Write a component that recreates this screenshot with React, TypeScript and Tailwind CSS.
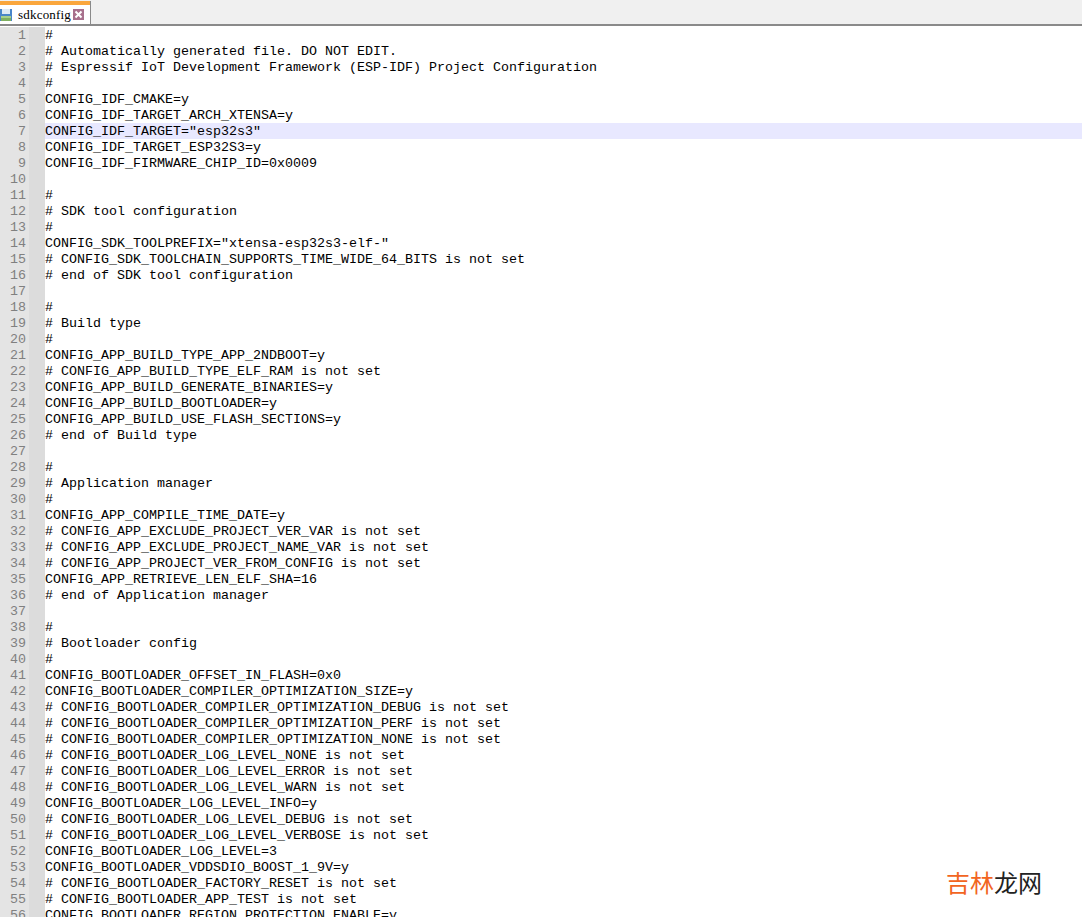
const lines: string[] = [
  "#",
  "# Automatically generated file. DO NOT EDIT.",
  "# Espressif IoT Development Framework (ESP-IDF) Project Configuration",
  "#",
  "CONFIG_IDF_CMAKE=y",
  "CONFIG_IDF_TARGET_ARCH_XTENSA=y",
  'CONFIG_IDF_TARGET="esp32s3"',
  "CONFIG_IDF_TARGET_ESP32S3=y",
  "CONFIG_IDF_FIRMWARE_CHIP_ID=0x0009",
  "",
  "#",
  "# SDK tool configuration",
  "#",
  'CONFIG_SDK_TOOLPREFIX="xtensa-esp32s3-elf-"',
  "# CONFIG_SDK_TOOLCHAIN_SUPPORTS_TIME_WIDE_64_BITS is not set",
  "# end of SDK tool configuration",
  "",
  "#",
  "# Build type",
  "#",
  "CONFIG_APP_BUILD_TYPE_APP_2NDBOOT=y",
  "# CONFIG_APP_BUILD_TYPE_ELF_RAM is not set",
  "CONFIG_APP_BUILD_GENERATE_BINARIES=y",
  "CONFIG_APP_BUILD_BOOTLOADER=y",
  "CONFIG_APP_BUILD_USE_FLASH_SECTIONS=y",
  "# end of Build type",
  "",
  "#",
  "# Application manager",
  "#",
  "CONFIG_APP_COMPILE_TIME_DATE=y",
  "# CONFIG_APP_EXCLUDE_PROJECT_VER_VAR is not set",
  "# CONFIG_APP_EXCLUDE_PROJECT_NAME_VAR is not set",
  "# CONFIG_APP_PROJECT_VER_FROM_CONFIG is not set",
  "CONFIG_APP_RETRIEVE_LEN_ELF_SHA=16",
  "# end of Application manager",
  "",
  "#",
  "# Bootloader config",
  "#",
  "CONFIG_BOOTLOADER_OFFSET_IN_FLASH=0x0",
  "CONFIG_BOOTLOADER_COMPILER_OPTIMIZATION_SIZE=y",
  "# CONFIG_BOOTLOADER_COMPILER_OPTIMIZATION_DEBUG is not set",
  "# CONFIG_BOOTLOADER_COMPILER_OPTIMIZATION_PERF is not set",
  "# CONFIG_BOOTLOADER_COMPILER_OPTIMIZATION_NONE is not set",
  "# CONFIG_BOOTLOADER_LOG_LEVEL_NONE is not set",
  "# CONFIG_BOOTLOADER_LOG_LEVEL_ERROR is not set",
  "# CONFIG_BOOTLOADER_LOG_LEVEL_WARN is not set",
  "CONFIG_BOOTLOADER_LOG_LEVEL_INFO=y",
  "# CONFIG_BOOTLOADER_LOG_LEVEL_DEBUG is not set",
  "# CONFIG_BOOTLOADER_LOG_LEVEL_VERBOSE is not set",
  "CONFIG_BOOTLOADER_LOG_LEVEL=3",
  "CONFIG_BOOTLOADER_VDDSDIO_BOOST_1_9V=y",
  "# CONFIG_BOOTLOADER_FACTORY_RESET is not set",
  "# CONFIG_BOOTLOADER_APP_TEST is not set",
  "CONFIG_BOOTLOADER_REGION_PROTECTION_ENABLE=y",
];

function SaveIcon() {
  return (
    <svg width="12" height="12" viewBox="0 0 12 12" className="shrink-0">
      <rect x="0" y="0" width="12" height="12" fill="#4a86c8" />
      <rect x="2" y="0" width="8" height="5" fill="#dfeaf6" />
      <rect x="1" y="7" width="10" height="2" fill="#a8d08c" />
      <rect x="1" y="9" width="10" height="3" fill="#7fb060" />
    </svg>
  );
}

function CloseIcon() {
  return (
    <svg width="11" height="11" viewBox="0 0 11 11" className="shrink-0">
      <rect x="0" y="0" width="11" height="11" fill="#a8708c" />
      <path d="M2.5 2.5 L8.5 8.5 M8.5 2.5 L2.5 8.5" stroke="#ffffff" strokeWidth="2" />
    </svg>
  );
}

export default function App() {
  return (
    <div className="flex h-[917px] w-[1082px] flex-col overflow-hidden bg-white font-['Liberation_Mono',monospace] text-[13.33px] leading-4 text-black">
      <div className="flex h-[26px] shrink-0 items-start border-b-2 border-[#8a8a8a] bg-[#f0f0f0]">
        <div className="mt-px h-[23px] w-[91px] border-r border-[#8a8a8a] bg-white">
          <div className="h-1 bg-[#faa63c]" />
          <div className="flex h-[19px] items-center">
            <SaveIcon />
            <span className="ml-[6px] w-[55px] font-['Liberation_Serif',serif] text-[13px] tracking-[0.2px]">sdkconfig</span>
            <CloseIcon />
          </div>
        </div>
      </div>
      <div className="flex-1 overflow-hidden pt-px">
        {lines.map((line, i) => (
          <div key={i} className={`flex h-4 ${i === 6 ? "bg-[#e8e8ff]" : ""}`}>
            <div className="w-[29px] shrink-0 bg-[#e4e4e4] pr-[3px] pt-px text-right text-[#808080]">{i + 1}</div>
            <div className="w-4 shrink-0 bg-[#dcdcdc]" />
            <div className="whitespace-pre pt-px">{line}</div>
          </div>
        ))}
      </div>
      <div className="absolute left-[946px] top-[868px] font-['Noto_Sans_CJK_SC',sans-serif] text-[24px] leading-7">
        <span className="text-[#f26522]">吉林</span>
        <span className="text-[#222]">龙网</span>
      </div>
    </div>
  );
}
